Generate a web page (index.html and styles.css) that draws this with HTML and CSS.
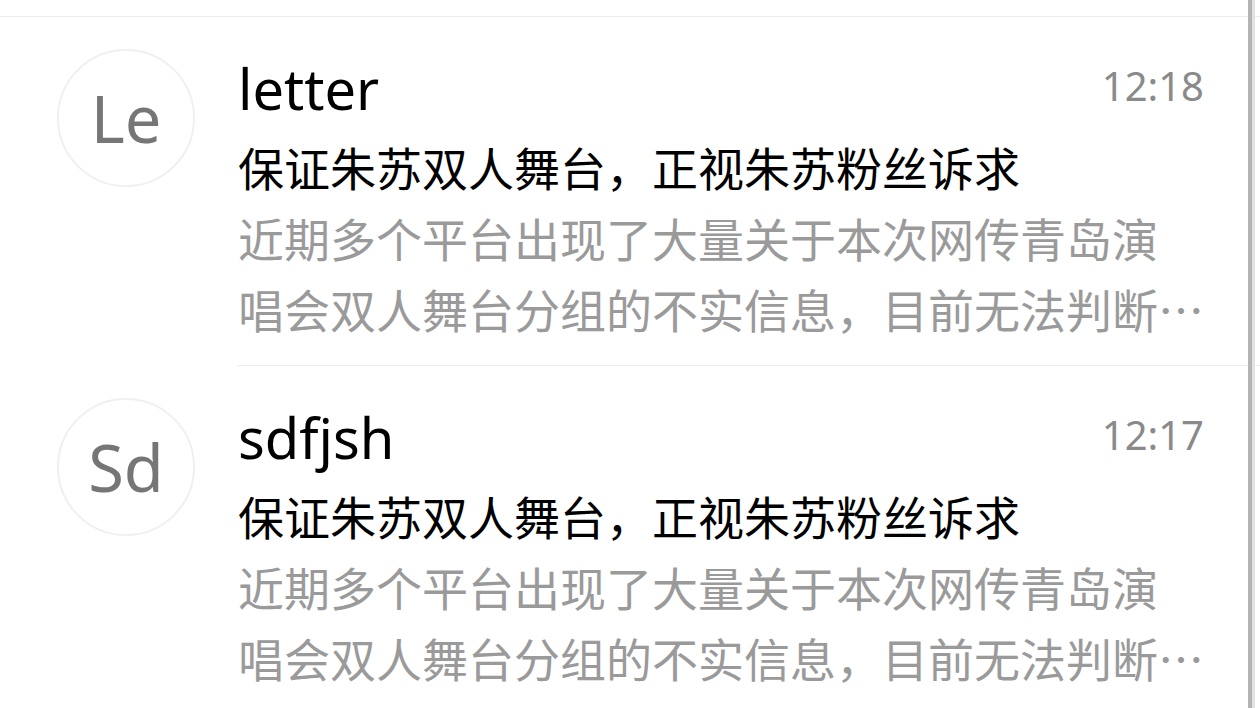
FILE: index.html
```html
<!DOCTYPE html>
<html lang="zh-CN">

<head>
    <meta charset="UTF-8">
    <meta name="viewport" content="width=device-width, initial-scale=1.0">
    <title>收件箱</title>
    <link rel="stylesheet" href="styles.css">
</head>

<body>
    <div class="inbox">
        <div class="top"></div>
        <ul class="mails">
            <li class="mail">
                <div class="avatar">Le</div>
                <div class="body">
                    <div class="head">
                        <span class="from">letter</span>
                        <span class="time">12:18</span>
                    </div>
                    <div class="subject">保证朱苏双人舞台，正视朱苏粉丝诉求</div>
                    <div class="preview">
                        <span>近期多个平台出现了大量关于本次网传青岛演</span>
                        <span>唱会双人舞台分组的不实信息，目前无法判断<i class="more">…</i></span>
                    </div>
                </div>
            </li>
            <li class="mail">
                <div class="avatar">Sd</div>
                <div class="body">
                    <div class="head">
                        <span class="from">sdfjsh</span>
                        <span class="time">12:17</span>
                    </div>
                    <div class="subject">保证朱苏双人舞台，正视朱苏粉丝诉求</div>
                    <div class="preview">
                        <span>近期多个平台出现了大量关于本次网传青岛演</span>
                        <span>唱会双人舞台分组的不实信息，目前无法判断<i class="more">…</i></span>
                    </div>
                </div>
            </li>
        </ul>
        <div class="scrollbar"></div>
    </div>
</body>

</html>
```

FILE: styles.css
```css
html,
body {
    margin: 0;
    padding: 0;
    background: #ffffff;
}

body {
    font-family: "Noto Sans", "Noto Sans CJK SC", sans-serif;
    color: #000000;
    overflow: hidden;
}

.inbox {
    position: relative;
    width: 1260px;
    height: 708px;
    overflow: hidden;
}

.top {
    height: 16px;
    border-bottom: 1px solid #ebebeb;
}

.mails {
    list-style: none;
    margin: 0;
    padding: 0;
}

.mail {
    display: flex;
    gap: 43px;
    padding-left: 57px;
}

.avatar {
    flex: none;
    width: 134px;
    height: 134px;
    margin-top: 32px;
    border: 2px solid #f0f0f0;
    border-radius: 50%;
    display: flex;
    align-items: center;
    justify-content: center;
    font-size: 65px;
    color: #767676;
}

.body {
    flex: 1;
    padding: 43px 56px 20px 0;
    border-bottom: 1px solid #ebebeb;
}

.head {
    display: flex;
    justify-content: space-between;
    align-items: flex-start;
}

.from {
    font-size: 56px;
    line-height: 56px;
}

.time {
    margin-top: 6px;
    font-size: 40px;
    line-height: 40px;
    color: #8a8a8a;
}

.subject {
    margin-top: 22px;
    font-size: 46px;
    line-height: 60px;
    white-space: nowrap;
}

.preview {
    margin-top: 7px;
    font-size: 46px;
    line-height: 69px;
    color: #9a9a9a;
}

.preview span {
    display: block;
    white-space: nowrap;
}

.preview .more {
    font-style: normal;
    font-family: "Noto Sans CJK SC", sans-serif;
}

/* 滚动条 */
.scrollbar {
    position: absolute;
    top: 0;
    bottom: 0;
    left: 1248px;
    width: 4px;
    background: #b4b4b4;
    border-right: 3px solid #e2e2e2;
}
```
